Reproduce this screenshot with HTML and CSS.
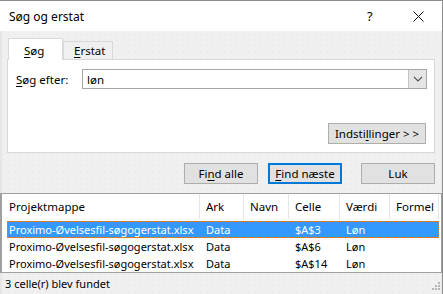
FILE: index.html
```html
<!DOCTYPE html>
<html>
<head>
<meta charset="utf-8">
<link rel="stylesheet" href="styles.css">
</head>
<body>
<div class="window">
  <div class="titlebar">
    <span class="title">Søg og erstat</span>
    <span class="help">?</span>
    <span class="close"><svg width="11" height="11" viewBox="0 0 11 11"><path d="M0.5 0.5 L10.5 10.5 M10.5 0.5 L0.5 10.5" stroke="#111" stroke-width="1" fill="none"/></svg></span>
  </div>
  <div class="body">
    <div class="tabs">
      <div class="tab active"><u>S</u>øg</div>
      <div class="tab"><u>E</u>rstat</div>
    </div>
    <div class="panel">
      <div class="findrow">
        <label class="lbl"><u>S</u>øg efter:</label>
        <div class="combo">
          <span class="value">løn</span>
          <span class="drop"><svg width="10" height="6" viewBox="0 0 10 6"><path d="M1 1 L5 5 L9 1" stroke="#555" stroke-width="1.1" fill="none"/></svg></span>
        </div>
      </div>
      <div class="optrow">
        <button class="btn opt">Indsti<u>l</u>linger &gt; &gt;</button>
      </div>
    </div>
    <div class="actions">
      <button class="btn act">Fi<u>n</u>d alle</button>
      <button class="btn act primary"><u>F</u>ind næste</button>
      <button class="btn act luk">Luk</button>
    </div>
  </div>
  <div class="list">
    <div class="lrow head">
      <div class="c c1">Projektmappe</div>
      <div class="c c2">Ark</div>
      <div class="c c3">Navn</div>
      <div class="c c4">Celle</div>
      <div class="c c5">Værdi</div>
      <div class="c c6">Formel</div>
    </div>
    <div class="lrow item sel">
      <div class="c c1">Proximo-Øvelsesfil-søgogerstat.xlsx</div>
      <div class="c c2">Data</div>
      <div class="c c3"></div>
      <div class="c c4">$A$3</div>
      <div class="c c5">Løn</div>
      <div class="c c6"></div>
    </div>
    <div class="lrow item">
      <div class="c c1">Proximo-Øvelsesfil-søgogerstat.xlsx</div>
      <div class="c c2">Data</div>
      <div class="c c3"></div>
      <div class="c c4">$A$6</div>
      <div class="c c5">Løn</div>
      <div class="c c6"></div>
    </div>
    <div class="lrow item">
      <div class="c c1">Proximo-Øvelsesfil-søgogerstat.xlsx</div>
      <div class="c c2">Data</div>
      <div class="c c3"></div>
      <div class="c c4">$A$14</div>
      <div class="c c5">Løn</div>
      <div class="c c6"></div>
    </div>
  </div>
  <div class="status">
    <span>3 celle(r) blev fundet</span>
    <svg class="grip" width="12" height="12" viewBox="0 0 12 12">
      <g fill="#b5b5b5">
        <rect x="9" y="1" width="2" height="2"/>
        <rect x="6" y="4" width="2" height="2"/><rect x="9" y="4" width="2" height="2"/>
        <rect x="3" y="7" width="2" height="2"/><rect x="6" y="7" width="2" height="2"/><rect x="9" y="7" width="2" height="2"/>
      </g>
    </svg>
  </div>
</div>
</body>
</html>
```

FILE: styles.css
```css
* { box-sizing: border-box; }
html, body { margin: 0; padding: 0; }
body {
  width: 443px;
  height: 294px;
  overflow: hidden;
  font-family: "Noto Sans", "Open Sans", sans-serif;
  font-size: 11.5px;
  color: #000;
  background: #f0f0f0;
}
u { text-decoration: underline; text-underline-offset: 2px; }
.window {
  width: 443px;
  height: 294px;
  border-top: 1px solid #8c8c8c;
  border-right: 1px solid #8c8c8c;
  display: flex;
  flex-direction: column;
  background-color: #f0f0f0;
  background-image: radial-gradient(circle, #e6e6e6 0.6px, transparent 0.8px);
  background-size: 6px 6px;
}
.titlebar {
  height: 30px;
  flex: none;
  background: #fff;
  display: flex;
  align-items: center;
  padding-left: 9px;
  font-size: 12px;
}
.title { flex: 1; }
.help { width: 8px; margin-right: 38px; font-size: 13px; }
.close { width: 11px; height: 11px; margin-right: 18px; display: flex; }
.body {
  flex: none;
  padding: 7px 0 0 7px;
  height: 162px;
  border-left: 2px solid #e6e6e6;
}
.tabs {
  display: flex;
  align-items: flex-end;
  height: 21px;
  position: relative;
  z-index: 1;
}
.tab {
  height: 18px;
  border: 1px solid #d9d9d9;
  border-bottom: none;
  background: #f0f0f0;
  padding: 0 0 0 10px;
  width: 50px;
  line-height: 18px;
}
.tab.active {
  height: 22px;
  width: 55px;
  background: #fff;
  padding: 3px 0 0 15px;
  margin-left: -1px;
  margin-bottom: -1px;
}
.panel {
  width: 428px;
  height: 94px;
  margin-left: -2px;
  background: #fff;
  border: 1px solid #d9d9d9;
  padding: 9px 7px 0 8px;
  display: flex;
  flex-direction: column;
}
.findrow {
  display: flex;
  align-items: center;
  height: 20px;
}
.lbl { width: 66px; }
.combo {
  width: 345px;
  height: 20px;
  border: 1px solid #a6a6a6;
  display: flex;
  align-items: center;
}
.value { flex: 1; padding-left: 4px; }
.drop {
  width: 18px;
  height: 18px;
  background: #e5e5e5;
  border-left: 1px solid #c4c4c4;
  display: flex;
  align-items: center;
  justify-content: center;
}
.optrow {
  display: flex;
  justify-content: flex-end;
  margin-top: 34px;
  padding-right: 1px;
}
.btn {
  font-family: inherit;
  font-size: 11.5px;
  color: #000;
  background: #e1e1e1;
  border: 1px solid #adadad;
  padding: 0;
  margin: 0;
  height: 21px;
  white-space: nowrap;
}
.opt { width: 98px; }
.actions {
  display: flex;
  margin-top: 10px;
  padding-left: 175px;
}
.act { width: 74px; }
.primary { margin-left: 10px; border: 2px solid #0078d7; }
.luk { margin-left: 19px; }
.list {
  flex: none;
  height: 80px;
  background: #fff;
  border-top: 1px solid #a0a0a0;
  border-left: 2px solid #a0a0a0;
  border-right: 1px solid #a0a0a0;
  border-bottom: 1px solid #a0a0a0;
  padding: 0 0 0 5px;
  font-size: 11px;
}
.lrow {
  display: grid;
  grid-template-columns: 193px 44px 45px 51px 50px 49px;
}
.c { overflow: hidden; white-space: nowrap; }
.head { height: 25px; }
.head .c {
  padding-left: 2px;
  line-height: 26px;
  border-right: 1px solid #e5e5e5;
  font-size: 11.5px;
}
.head .c2, .head .c3, .head .c4, .head .c5, .head .c6 { padding-left: 6px; }
.item {
  height: 17px;
  line-height: 17px;
  width: 432px;
}
.item.sel { margin-top: 2px; }
.item .c { padding-left: 2px; }
.item .c2, .item .c3, .item .c4, .item .c5, .item .c6 { padding-left: 6px; }
.sel {
  background: #3399ff;
  color: #fff;
  outline: 1px dotted #e08020;
  outline-offset: -1px;
}
.status {
  flex: 1;
  display: flex;
  align-items: center;
  padding-left: 3px;
  position: relative;
  border-left: 2px solid #e6e6e6;
  font-size: 11px;
}
.grip { position: absolute; right: 1px; bottom: 1px; }
```
